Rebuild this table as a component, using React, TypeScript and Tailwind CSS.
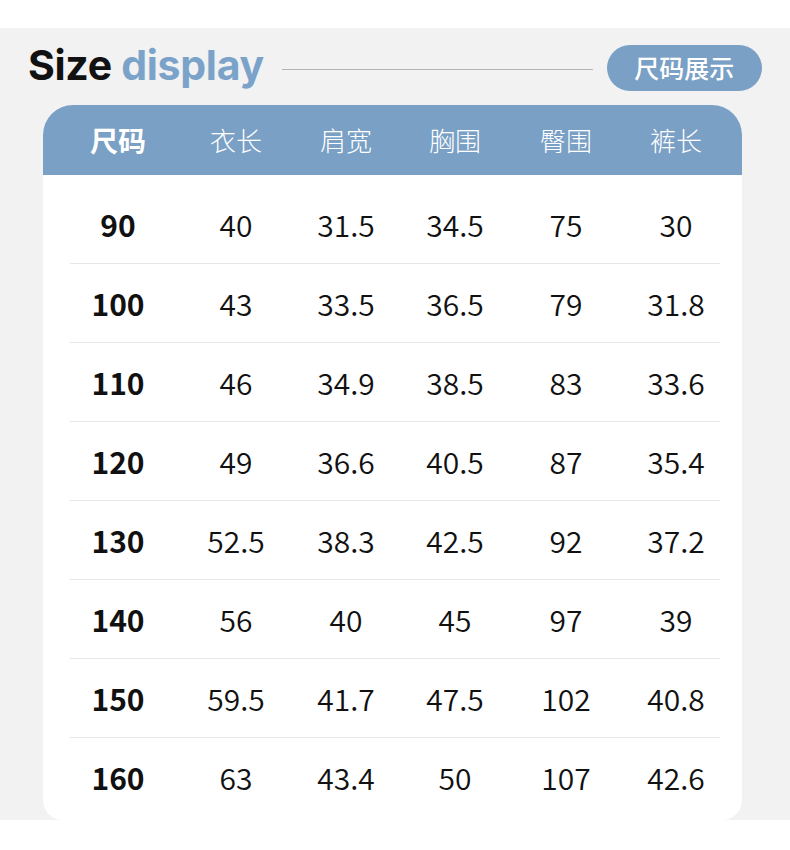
import React from "react";

const BLUE = "#7aa0c5";
const cols = "grid grid-cols-[110px_126px_94px_124px_98px_122px] pl-[20px]";

const rows: string[][] = [
  ["90", "40", "31.5", "34.5", "75", "30"],
  ["100", "43", "33.5", "36.5", "79", "31.8"],
  ["110", "46", "34.9", "38.5", "83", "33.6"],
  ["120", "49", "36.6", "40.5", "87", "35.4"],
  ["130", "52.5", "38.3", "42.5", "92", "37.2"],
  ["140", "56", "40", "45", "97", "39"],
  ["150", "59.5", "41.7", "47.5", "102", "40.8"],
  ["160", "63", "43.4", "50", "107", "42.6"],
];

const headers = ["尺码", "衣长", "肩宽", "胸围", "臀围", "裤长"];

const cjk = { fontFamily: '"Noto Sans CJK SC", "Noto Sans", sans-serif' };

export default function App() {
  return (
    <div className="w-[790px] h-[850px] bg-white" style={cjk}>
      <div className="h-[28px] bg-white" />
      <section className="bg-[#f2f2f2] h-[792px] pt-[17px]">
        <div className="flex items-center h-[46px] pl-[28px]">
          <div
            className="text-[41px] font-bold leading-none tracking-[-0.3px] whitespace-nowrap mt-[-5px]"
            style={{ fontFamily: '"Inter", "Liberation Sans", sans-serif' }}
          >
            <span className="text-[#111111]">Size</span>{" "}
            <span className="text-[#7ba3c9]">display</span>
          </div>
          <div className="ml-[18px] w-[311px] h-px bg-[#b5b5b5] mt-[2px]" />
          <div className="ml-[14px] w-[155px] h-[46px] rounded-full bg-[#7aa0c5] flex items-center justify-center text-white text-[25px] font-medium leading-none pb-[2px]">
            尺码展示
          </div>
        </div>
        <div className="ml-[43px] mt-[14px] w-[699px] h-[715px] bg-white rounded-t-[30px] rounded-b-[20px] overflow-hidden">
          <div className={`${cols} h-[70px] items-center text-white`} style={{ backgroundColor: BLUE }}>
            {headers.map((h, i) => (
              <div
                key={h}
                className={
                  i === 0
                    ? "text-center text-[28px] font-bold leading-none"
                    : "text-center text-[26px] font-light leading-none"
                }
              >
                {h}
              </div>
            ))}
          </div>
          <div className="pt-[10px]">
            {rows.map((r, ri) => (
              <React.Fragment key={r[0]}>
                {ri > 0 && <div className="ml-[27px] mr-[22px] h-px bg-[#e6e6e6]" />}
                <div className={`${cols} h-[78px] items-center text-[#111111]`}>
                  {r.map((v, i) => (
                    <div
                      key={i}
                      className={
                        i === 0
                          ? "text-center text-[30px] font-bold leading-none"
                          : "text-center text-[30px] font-[350] leading-none"
                      }
                    >
                      {v}
                    </div>
                  ))}
                </div>
              </React.Fragment>
            ))}
          </div>
        </div>
      </section>
    </div>
  );
}
